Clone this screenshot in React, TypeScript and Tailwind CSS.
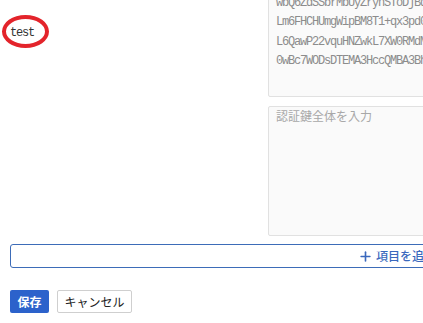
import { Plus } from "lucide-react";

const keyText = [
  "b3BlbnNzaC1rZXktdjEAAAAABG5vbmUAAAAEbm9uZQAAAAAAAAABAAABlwAAAAdzc2gtcn",
  "wbQ6ZdSSbrMbUyZrynSToDjBqKe7vN2xYw1FhR9sLpQ0aXcUeT3mGiZ8oJkH4yVdWbEn",
  "Lm6FHCHUmgWipBM8T1+qx3pd0sKjR7yTfN2aQeVb9LcXo4PzG1hWmU8iDnE5rYtJgSl",
  "L6QawP22vquHNZwkL7XW0RMdMf3nBcY8sTjKe1oVhG9pRaZ4xDi2LuWqEyN7mFbC0tA",
  "0wBc7WODsDTEMA3HccQMBA3BhK9fLp2sRvXe8NnYqGj4oTzU1mWiC6aDkHbE5tPyIlS",
].join("\n");

export default function App() {
  return (
    <div className="w-[423px] h-[323px] overflow-hidden bg-white">
      <div className="relative w-[794px] px-[10px] -mt-[29px] font-['Noto_Sans_CJK_JP',sans-serif]">
        <div className="flex">
          <div className="w-[258px] pt-[54px] text-[12px] leading-[16px] tracking-[-1.2px] text-[#333] font-['Liberation_Mono','Noto_Sans_CJK_JP',monospace]">
            test
          </div>
          <div className="flex-1 flex flex-col gap-[9px]">
            <textarea
              readOnly
              wrap="off"
              value={keyText}
              className="h-[126px] w-full resize-none overflow-hidden rounded-[2px] border border-[#e1e1e1] bg-[#fafafa] px-[7px] pt-[2px] text-[12px] leading-[19.5px] tracking-[-1.2px] text-[#8c8c8c] outline-none font-['Liberation_Mono','Noto_Sans_CJK_JP',monospace]"
            />
            <textarea
              readOnly
              placeholder="認証鍵全体を入力"
              className="h-[130px] w-full resize-none overflow-hidden rounded-[2px] border border-[#e1e1e1] bg-[#fafafa] px-[7px] pt-[2px] text-[12px] leading-[19.5px] tracking-[-1.2px] text-[#8c8c8c] outline-none placeholder:tracking-normal placeholder:text-[#a8a8a8] font-['Liberation_Mono','Noto_Sans_CJK_JP',monospace]"
            />
          </div>
        </div>

        <button className="mt-[8px] flex h-[24px] w-full items-center justify-center gap-[3px] rounded-[3px] border border-[#3d6cb8] bg-white text-[12px] font-medium text-[#3a68bd]">
          <Plus className="h-[15px] w-[15px]" strokeWidth={2.6} />
          項目を追加
        </button>

        <div className="mt-[22px] flex gap-[8px]">
          <button className="h-[23px] w-[39px] rounded-[2px] bg-[#2c62cb] text-[12px] font-bold text-white">
            保存
          </button>
          <button className="h-[23px] w-[75px] rounded-[2px] border border-[#cfcfcf] bg-white text-[12px] text-[#222]">
            キャンセル
          </button>
        </div>

        <div className="absolute left-[2px] top-[44px] h-[33px] w-[47px] rounded-[50%] border-[4px] border-[#e3242b]" />
      </div>
    </div>
  );
}
